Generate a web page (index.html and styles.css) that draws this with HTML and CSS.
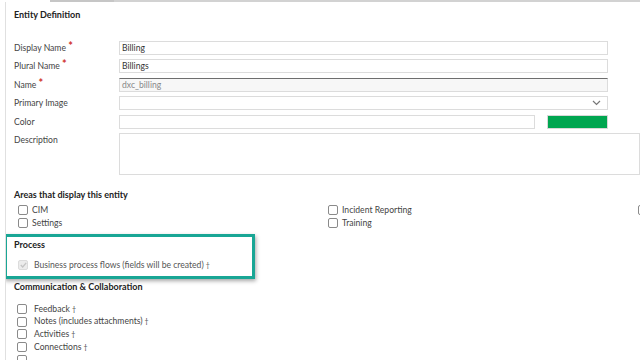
FILE: index.html
```html
<!DOCTYPE html>
<html lang="en">
<head>
    <meta charset="UTF-8">
    <title>Entity Definition</title>
    <link rel="stylesheet" href="styles.css">
</head>
<body>
    <div class="tabs">
        <div class="tab-gap"></div>
        <div class="tab"></div>
        <div class="tab-rest"></div>
    </div>
    <div class="page">
        <!-- Entity Definition -->
        <h2 class="section-title">Entity Definition</h2>
        <div class="form">
            <label>Display Name <span class="req">*</span></label>
            <div class="field">Billing</div>
            <label>Plural Name <span class="req">*</span></label>
            <div class="field">Billings</div>
            <label>Name <span class="req">*</span></label>
            <div class="field readonly">dxc_billing</div>
            <label>Primary Image</label>
            <div class="field select">
                <svg class="chevron" width="9" height="6" viewBox="0 0 9 6"><path d="M1 1l3.5 3.5L8 1" fill="none" stroke="#777" stroke-width="1.2"/></svg>
            </div>
            <label>Color</label>
            <div class="color-row">
                <div class="field"></div>
                <div class="swatch"></div>
            </div>
            <label>Description</label>
            <div class="field textarea"></div>
        </div>

        <!-- Areas -->
        <h2 class="section-title areas-title">Areas that display this entity</h2>
        <div class="areas">
            <div class="check"><span class="box"></span>CIM</div>
            <div class="check"><span class="box"></span>Incident Reporting</div>
            <div class="check"><span class="box"></span></div>
            <div class="check"><span class="box"></span>Settings</div>
            <div class="check"><span class="box"></span>Training</div>
        </div>

        <!-- Process (highlighted) -->
        <div class="highlight">
            <h2 class="section-title">Process</h2>
            <div class="check process-check"><span class="box checked">
                <svg width="7" height="6" viewBox="0 0 7 6"><path d="M0.8 3l1.9 2 3.5-4.2" fill="none" stroke="#c4c4c4" stroke-width="1.3"/></svg>
            </span>Business process flows (fields will be created) <span class="dag">†</span></div>
        </div>

        <!-- Communication -->
        <h2 class="section-title comm-title">Communication &amp; Collaboration</h2>
        <div class="list">
            <div class="check"><span class="box"></span>Feedback <span class="dag">†</span></div>
            <div class="check"><span class="box"></span>Notes (includes attachments) <span class="dag">†</span></div>
            <div class="check"><span class="box"></span>Activities <span class="dag">†</span></div>
            <div class="check"><span class="box"></span>Connections <span class="dag">†</span></div>
            <div class="check"><span class="box"></span></div>
        </div>
    </div>
</body>
</html>
```

FILE: styles.css
```css
body {
    margin: 0;
    width: 640px;
    height: 360px;
    overflow: hidden;
    background: #ffffff;
    font-family: 'Lato', 'Open Sans', sans-serif;
    font-size: 8.6px;
    color: #444;
}
.tabs {
    display: flex;
    height: 2px;
}
.tab-gap {
    width: 50px;
}
.tab {
    width: 63px;
    border-top: 2px solid #c6c6c6;
    border-right: 1px solid #c6c6c6;
}
.tab-rest {
    flex: 1;
    border-top: 2px solid #d2d2d2;
}
.page {
    margin-left: 5px;
    border-left: 1px solid #e0e0e0;
    padding-left: 8px;
    height: 358px;
    overflow: hidden;
}
.section-title {
    margin: 0;
    font-size: 9px;
    font-weight: bold;
    color: #222;
    padding-top: 7px;
    line-height: 12px;
}
.form {
    display: grid;
    grid-template-columns: 105px 489px 1fr;
    grid-auto-rows: 14px;
    row-gap: 4.4px;
    margin-top: 20px;
}
.form label {
    grid-column: 1;
    line-height: 14px;
    color: #444;
}
.form .field,
.form .color-row {
    grid-column: 2;
}
.req {
    color: #d0312d;
    font-size: 11px;
    font-weight: bold;
    line-height: 8px;
    vertical-align: 1px;
}
.field {
    box-sizing: border-box;
    border: 1px solid #dcdcdc;
    background: #fff;
    height: 14px;
    line-height: 12px;
    padding-left: 2px;
    color: #333;
}
.readonly {
    background: #f7f7f7;
    border-top: 1px solid #6e6e6e;
    color: #888;
}
.select {
    display: flex;
    justify-content: flex-end;
    align-items: center;
    padding-right: 6px;
}
.color-row {
    display: flex;
    gap: 12px;
}
.color-row .field {
    width: 416px;
}
.swatch {
    width: 61px;
    height: 14px;
    box-sizing: border-box;
    border: 1px solid #d8d8d8;
    background: #00a650;
}
.textarea {
    height: 42px;
    width: 521px;
}
.areas-title {
    margin-top: 35px;
}
.areas {
    display: grid;
    grid-template-columns: 310px 310px 1fr;
    margin-top: 3px;
    margin-left: 4px;
}
.check {
    display: flex;
    align-items: center;
    height: 13px;
    line-height: 13px;
    color: #444;
    white-space: nowrap;
}
.box {
    box-sizing: border-box;
    width: 10px;
    height: 10px;
    border: 1px solid #8a8a8a;
    border-radius: 2px;
    margin-right: 4px;
    flex-shrink: 0;
    display: flex;
    align-items: center;
    justify-content: center;
}
.box.checked {
    border-color: #dcdcdc;
    background: #ececec;
}
.dag {
    font-size: 7px;
    margin-left: 2px;
}
.highlight {
    margin-left: -10px;
    margin-top: 4px;
    width: 238px;
    height: 39px;
    border: 3px solid #19a695;
    padding-left: 7px;
    box-shadow: 1px 2px 4px rgba(0, 0, 0, 0.35);
}
.highlight .section-title {
    padding-top: 2px;
}
.process-check {
    margin-top: 8px;
    margin-left: 4px;
    color: #555;
}
.process-check .box {
    margin-right: 6px;
}
.comm-title {
    padding-top: 2px;
}
.list {
    margin-top: 10px;
    margin-left: 3px;
}
.list .check {
    height: 12.6px;
}
.list .box {
    margin-right: 7px;
}
```
